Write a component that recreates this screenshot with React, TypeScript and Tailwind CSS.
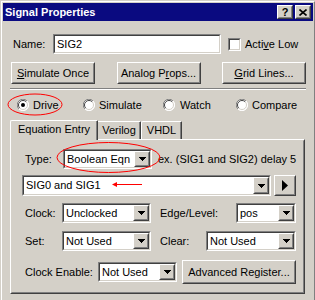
import React from "react";

const FONT = { fontFamily: '"Liberation Sans", Arial, sans-serif' };

function Raised({ className = "", children }: { className?: string; children?: React.ReactNode }) {
  return (
    <div className={"border border-t-white border-l-white border-r-[#404040] border-b-[#404040] " + className}>
      <div className="w-full h-full border border-t-[#d4d0c8] border-l-[#d4d0c8] border-r-[#808080] border-b-[#808080] flex items-center justify-center bg-[#d4d0c8]">
        {children}
      </div>
    </div>
  );
}

function Sunken({ className = "", children }: { className?: string; children?: React.ReactNode }) {
  return (
    <div className={"border border-t-[#808080] border-l-[#808080] border-r-white border-b-white " + className}>
      <div className="w-full h-full border border-t-[#404040] border-l-[#404040] border-r-[#d4d0c8] border-b-[#d4d0c8] bg-white flex items-stretch">
        {children}
      </div>
    </div>
  );
}

function DownArrow() {
  return (
    <svg width="7" height="4" viewBox="0 0 7 4">
      <path d="M0 0h7L3.5 4z" fill="#000" shapeRendering="crispEdges" />
    </svg>
  );
}

function Combo({ value, className = "" }: { value: string; className?: string }) {
  return (
    <Sunken className={className}>
      <div className="flex-1 flex items-center pl-[2px] leading-[13px] overflow-hidden whitespace-nowrap">{value}</div>
      <Raised className="w-[16px] h-full">
        <DownArrow />
      </Raised>
    </Sunken>
  );
}

function Radio({ checked }: { checked?: boolean }) {
  return (
    <svg width="12" height="12" viewBox="0 0 12 12" className="shrink-0">
      <circle cx="6" cy="6" r="5.5" fill="#fff" />
      <path d="M10 1.9A5.5 5.5 0 0 0 1.9 10" stroke="#808080" fill="none" />
      <path d="M1.9 10A5.5 5.5 0 0 0 10 1.9" stroke="#fff" fill="none" />
      <path d="M9.2 2.8A4.5 4.5 0 0 0 2.8 9.2" stroke="#404040" fill="none" />
      <path d="M2.8 9.2A4.5 4.5 0 0 0 9.2 2.8" stroke="#d4d0c8" fill="none" />
      {checked && <circle cx="6" cy="6" r="2" fill="#000" />}
    </svg>
  );
}

function Btn({ children, className = "" }: { children: React.ReactNode; className?: string }) {
  return (
    <Raised className={className}>
      <span className="leading-[13px] whitespace-nowrap">{children}</span>
    </Raised>
  );
}

export default function App() {
  return (
    <div className="w-[315px] h-[300px] overflow-hidden relative bg-[#d4d0c8] text-[11px] text-black" style={FONT}>
      <div className="w-[316px] h-[320px] border border-t-[#d4d0c8] border-l-[#d4d0c8] border-r-[#404040] border-b-[#404040]">
        <div className="w-full h-full border border-t-white border-l-white border-r-[#808080] border-b-[#808080] p-[1px] flex flex-col">
          {/* title bar */}
          <div className="h-[18px] bg-[#0a0a80] flex items-center pl-[2px] pr-[2px]">
            <span className="text-white font-bold text-[11px] leading-[13px] flex-1">Signal Properties</span>
            <Raised className="w-[16px] h-[14px]">
              <span className="font-bold text-[11px] leading-[10px]">?</span>
            </Raised>
            <Raised className="w-[16px] h-[14px] ml-[2px]">
              <svg width="8" height="7" viewBox="0 0 8 7">
                <path d="M0.5 0.5L7.5 6.5M7.5 0.5L0.5 6.5" stroke="#000" strokeWidth="1.6" />
              </svg>
            </Raised>
          </div>

          {/* body */}
          <div className="flex flex-col">
            {/* name row */}
            <div className="flex items-center mt-[13px] h-[20px]">
              <span className="ml-[10px] w-[40px] leading-[13px]">Name:</span>
              <Sunken className="w-[168px] h-[20px]">
                <div className="flex items-center pl-[2px] leading-[13px]">SIG2</div>
              </Sunken>
              <Sunken className="w-[13px] h-[13px] ml-[7px]" />
              <span className="ml-[4px] leading-[13px]">
                Acti<span className="underline">v</span>e Low
              </span>
            </div>

            {/* buttons row */}
            <div className="flex mt-[8px] ml-[8px] w-[295px] justify-between">
              <Btn className="w-[84px] h-[22px]">
                <span className="underline">S</span>imulate Once
              </Btn>
              <Btn className="w-[84px] h-[22px]">
                Analog P<span className="underline">r</span>ops...
              </Btn>
              <Btn className="w-[84px] h-[22px]">
                <span className="underline">G</span>rid Lines...
              </Btn>
            </div>

            {/* separator */}
            <div className="mt-[4px] ml-[7px] w-[296px] border-t border-t-[#808080] border-b border-b-white" />

            {/* radio row */}
            <div className="flex items-center mt-[9px] ml-[14px] h-[12px]">
              <div className="flex items-center gap-[4px] w-[66px]">
                <Radio checked />
                <span className="leading-[13px]">Drive</span>
              </div>
              <div className="flex items-center gap-[4px] w-[80px]">
                <Radio />
                <span className="leading-[13px]">Simulate</span>
              </div>
              <div className="flex items-center gap-[5px] w-[73px]">
                <Radio />
                <span className="leading-[13px]">Watch</span>
              </div>
              <div className="flex items-center gap-[4px]">
                <Radio />
                <span className="leading-[13px]">Compare</span>
              </div>
            </div>

            {/* tabs */}
            <div className="flex items-end mt-[9px] ml-[7px] h-[19px] relative z-10">
              <div className="w-[88px] h-[20px] -mb-[1px] bg-[#d4d0c8] border-l border-t border-l-white border-t-white border-r border-r-[#404040] rounded-tl-[2px] rounded-tr-[1px] flex items-center justify-center shadow-[inset_-1px_0_#808080]">
                <span className="leading-[13px] pb-[2px]">Equation Entry</span>
              </div>
              <div className="w-[43px] h-[18px] border-t border-t-white border-r border-r-[#404040] rounded-tr-[1px] flex items-center justify-center shadow-[inset_-1px_0_#808080]">
                <span className="leading-[13px]">Verilog</span>
              </div>
              <div className="w-[41px] h-[18px] border-l border-t border-l-white border-t-white border-r border-r-[#404040] rounded-tl-[2px] rounded-tr-[1px] flex items-center justify-center shadow-[inset_-1px_0_#808080]">
                <span className="leading-[13px]">VHDL</span>
              </div>
            </div>

            {/* tab panel */}
            <div className="ml-[7px] w-[295px] h-[155px] border border-t-white border-l-white border-r-[#404040] border-b-[#404040]">
              <div className="w-full h-full border border-t-[#d4d0c8] border-l-[#d4d0c8] border-r-[#808080] border-b-[#808080] flex flex-col">
                {/* type row */}
                <div className="flex items-center mt-[8px] h-[20px]">
                  <span className="ml-[13px] w-[38px] leading-[13px]">Type:</span>
                  <Combo value="Boolean Eqn" className="w-[89px] h-[20px]" />
                  <span className="ml-[6px] leading-[13px] whitespace-nowrap">ex. (SIG1 and SIG2) delay 5</span>
                </div>

                {/* equation row */}
                <div className="flex items-center mt-[6px] h-[21px]">
                  <Combo value="SIG0 and SIG1" className="ml-[10px] w-[249px] h-[21px]" />
                  <Raised className="ml-[3px] w-[22px] h-[21px]">
                    <svg width="6" height="11" viewBox="0 0 6 11">
                      <path d="M0 0L6 5.5L0 11z" fill="#000" />
                    </svg>
                  </Raised>
                </div>

                {/* clock row */}
                <div className="flex items-center mt-[7px] h-[20px]">
                  <span className="ml-[13px] w-[37px] leading-[13px]">Clock:</span>
                  <Combo value="Unclocked" className="w-[89px] h-[20px]" />
                  <span className="ml-[9px] w-[76px] leading-[13px]">Edge/Level:</span>
                  <Combo value="pos" className="w-[60px] h-[20px]" />
                </div>

                {/* set row */}
                <div className="flex items-center mt-[8px] h-[20px]">
                  <span className="ml-[13px] w-[37px] leading-[13px]">Set:</span>
                  <Combo value="Not Used" className="w-[89px] h-[20px]" />
                  <span className="ml-[9px] w-[46px] leading-[13px]">Clear:</span>
                  <Combo value="Not Used" className="w-[90px] h-[20px]" />
                </div>

                {/* clock enable row */}
                <div className="flex items-center mt-[9px] h-[24px]">
                  <span className="ml-[13px] w-[73px] leading-[13px]">Clock Enable:</span>
                  <Combo value="Not Used" className="w-[79px] h-[20px]" />
                  <Btn className="ml-[5px] w-[114px] h-[24px]">Advanced Register...</Btn>
                </div>
              </div>
            </div>
          </div>
        </div>
      </div>

      {/* red annotations */}
      <svg className="absolute left-0 top-0 pointer-events-none" width="315" height="300">
        <ellipse cx="35" cy="104.5" rx="27" ry="10.5" fill="none" stroke="#ff0000" strokeWidth="1" />
        <ellipse cx="108.5" cy="157.5" rx="51.5" ry="15" fill="none" stroke="#ff0000" strokeWidth="1" />
        <line x1="114" y1="184.5" x2="142" y2="184.5" stroke="#ff0000" strokeWidth="1" />
        <path d="M112 184.5L117 182L117 187z" fill="#ff0000" />
      </svg>
    </div>
  );
}
